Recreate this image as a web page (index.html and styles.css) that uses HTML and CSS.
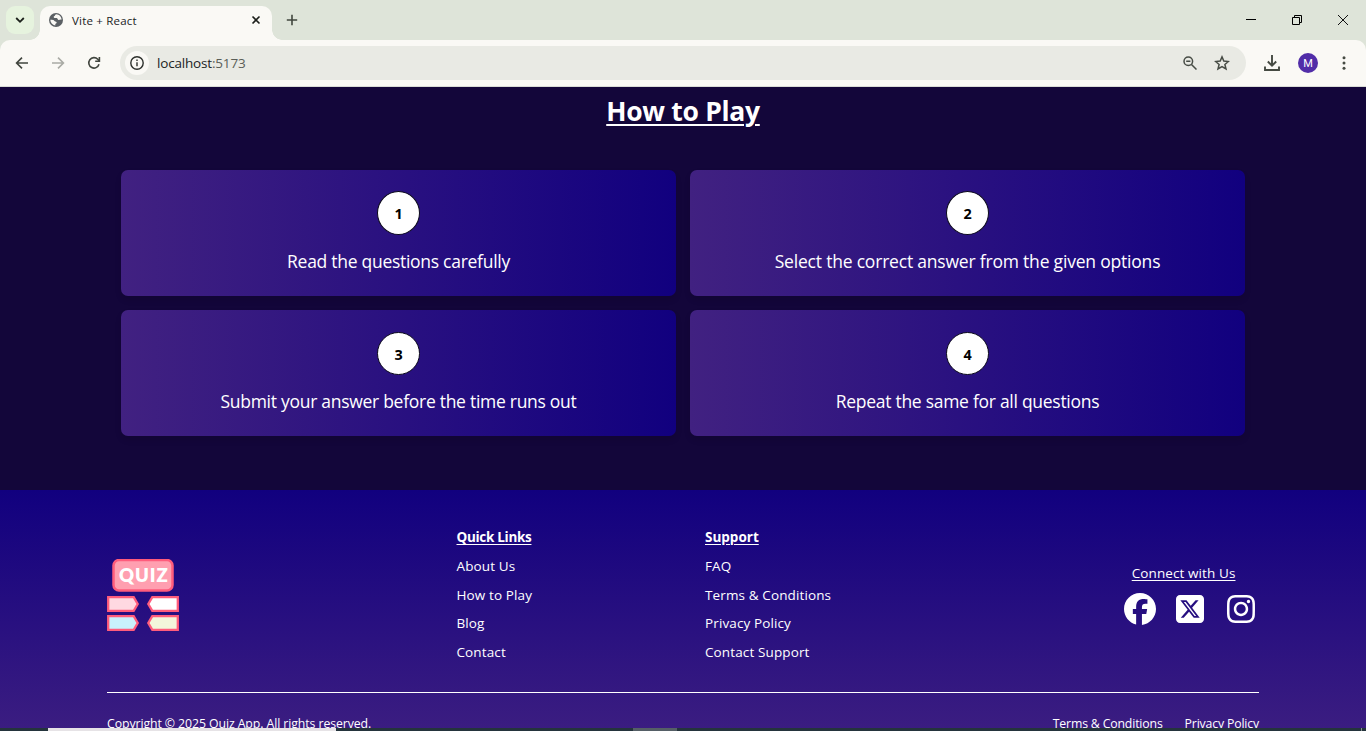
FILE: index.html
```html
<!DOCTYPE html>
<html lang="en">
<head>
<meta charset="utf-8">
<title>Vite + React</title>
<link rel="stylesheet" href="styles.css">
</head>
<body>
<div class="window">
  <header class="tabstrip">
    <div class="tab-search"><svg width="10" height="10" viewBox="0 0 10 10" fill="none" stroke="#1c211b" stroke-width="1.8"><path d="M1.2 3 5 6.800 8.800 3"/></svg></div>
    <div class="tab">
      <svg class="globe" width="14" height="14" viewBox="0 0 14 14"><circle cx="7" cy="7" r="7" fill="#5b6064"/><path d="M7.200 1.300C5.500 2 6.300 3 5 3.300 4.400 3.900 4.800 4.700 5.500 5h2.200c1.200.4.8 1.900 2 2 .9.100 1.500-.8 2.900-.3C12.500 4 10.400 1.500 7.200 1.300ZM1.300 6.800c.1 2.900 2.100 5.200 5 5.700V10.900c.9-.4 1.700-.9 1.200-1.900-.6-.8-1.700-.4-2.100-1.100-.3-.9-1.900-1.100-4.100-1.100Z" fill="#faf9f5"/></svg>
      <span class="tab-title">Vite + React</span>
      <svg class="tab-close" width="10" height="10" viewBox="0 0 10 10" stroke="#1c1f1b" stroke-width="1.600"><path d="m1.500 1.500 7 7m0-7-7 7"/></svg>
    </div>
    <svg class="new-tab" width="12" height="12" viewBox="0 0 12 12" stroke="#40463e" stroke-width="1.600"><path d="M6 .8v10.400M.8 6h10.400"/></svg>
    <div class="win-controls">
      <svg width="10" height="10" viewBox="0 0 10 10"><path d="M0 4h10v1H0z"/></svg>
      <svg width="10" height="10" viewBox="0 0 10 10" fill="none" stroke="#000"><path d="M.5 2.500h7v7h-7zM2.500 2.500v-2h7v7h-2"/></svg>
      <svg width="10" height="10" viewBox="0 0 10 10" stroke="#111"><path d="m0 0 10 10M10 0 0 10"/></svg>
    </div>
  </header>

  <nav class="toolbar">
    <div class="nav-buttons">
      <svg width="14" height="14" viewBox="0 0 14 14" fill="none" stroke="#40453e" stroke-width="1.600"><path d="M13 7H2M7 1.600 1.600 7 7 12.400"/></svg>
      <svg width="14" height="14" viewBox="0 0 14 14" fill="none" stroke="#a9aba5" stroke-width="1.600"><path d="M1 7h11M7 1.600 12.400 7 7 12.400"/></svg>
      <svg width="14" height="14" viewBox="0 0 14 14" fill="none" stroke="#40453e" stroke-width="1.600"><path d="M12 8.300A5.200 5.200 0 1 1 10.800 3.300L12.300 4.900"/><path d="M12.400 1v4.200H8.200"/></svg>
    </div>
    <div class="address">
      <span class="site-info"><svg width="14" height="14" viewBox="0 0 14 14" fill="none" stroke="#2d302c" stroke-width="1.400"><circle cx="7" cy="7" r="6.200"/><path d="M7 6.300v4M7 3.500v1.500"/></svg></span>
      <span class="url">localhost<span class="port">:5173</span></span>
      <svg class="zoom-icon" width="14" height="14" viewBox="0 0 14 14" fill="none" stroke="#474c45" stroke-width="1.500"><circle cx="5.300" cy="5.300" r="4.300"/><path d="m8.500 8.500 5 5M3.200 5.300h4.200"/></svg>
      <svg class="star" width="16" height="16" viewBox="0 0 16 16" fill="none" stroke="#474c45" stroke-width="1.500"><path d="m8 1.900 1.800 4.200 4.600.4-3.500 3 1.100 4.500L8 11.600 4 14l1.100-4.500-3.500-3 4.600-.4z"/></svg>
    </div>
    <div class="actions">
      <svg width="16" height="16" viewBox="0 0 16 16" fill="none" stroke="#454a42" stroke-width="1.900"><path d="M8 0v10.500M3.800 6.500 8 10.700l4.200-4.200M1 11.500V15h14v-3.500"/></svg>
      <span class="avatar">M</span>
      <svg class="menu" width="4" height="14" viewBox="0 0 4 14" fill="#454a42"><circle cx="2" cy="1.700" r="1.500"/><circle cx="2" cy="7" r="1.500"/><circle cx="2" cy="12.300" r="1.500"/></svg>
    </div>
  </nav>

  <main class="page">
    <section class="how">
      <h2>How to Play</h2>
      <div class="steps">
        <article class="step"><span class="num">1</span><p>Read the questions carefully</p></article>
        <article class="step"><span class="num">2</span><p class="long">Select the correct answer from the given options</p></article>
        <article class="step lower"><span class="num">3</span><p>Submit your answer before the time runs out</p></article>
        <article class="step lower"><span class="num">4</span><p>Repeat the same for all questions</p></article>
      </div>
    </section>

    <footer class="footer">
      <div class="footer-main">
        <div class="brand">
          <svg width="72" height="72" viewBox="0 0 72 72">
            <rect x="6.500" y="1" width="59" height="30.500" rx="5.500" fill="#ff9fb0" stroke="#ff5c7c" stroke-width="2.500"/>
            <text class="logo-text" x="36.800" y="22.700" text-anchor="middle">QUIZ</text>
            <g stroke="#ff5c7c" stroke-width="2.300">
              <path d="M1.200 38.200h25.500l4 6.800-4 6.800H1.200z" fill="#ffd9e1"/>
              <path d="M70.800 38.200H45.300l-4 6.800 4 6.800h25.500z" fill="#fff"/>
              <path d="M1.200 57.200h25.500l4 6.800-4 6.800H1.200z" fill="#c9f1fc"/>
              <path d="M70.800 57.200H45.300l-4 6.800 4 6.800h25.500z" fill="#f3f6db"/>
            </g>
          </svg>
        </div>
        <div class="links quick">
          <h3>Quick Links</h3>
          <a>About Us</a><a>How to Play</a><a>Blog</a><a>Contact</a>
        </div>
        <div class="links support">
          <h3>Support</h3>
          <a>FAQ</a><a>Terms &amp; Conditions</a><a>Privacy Policy</a><a>Contact Support</a>
        </div>
        <div class="connect">
          <p>Connect with Us</p>
          <div class="social">
            <svg width="32" height="32" viewBox="0 0 512 512" fill="#fff"><path d="M512 256C512 114.600 397.400 0 256 0S0 114.600 0 256c0 120 82.700 220.800 194.200 248.500V334.200h-52.800V256h52.800v-33.700c0-87.100 39.400-127.500 125-127.500 16.200 0 44.200 3.200 55.700 6.400v70.800c-6-.6-16.500-1-29.600-1-42 0-58.200 15.900-58.200 57.200V256h83.600l-14.400 78.200h-69.300v175.900C413.800 494.800 512 386.900 512 256z"/></svg>
            <svg width="28" height="32" viewBox="0 0 448 512" fill="#fff"><path d="M64 32C28.700 32 0 60.700 0 96v320c0 35.300 28.700 64 64 64h320c35.300 0 64-28.700 64-64V96c0-35.300-28.700-64-64-64H64zm297.100 84L257.300 234.600 379.400 396h-95.600L209 298.100 123.300 396H75.800l111-126.900L69.700 116h98l67.700 89.500L313.600 116h47.500zm-37.800 251.600L153.400 142.900h-28.300l171.800 224.700h26.300z"/></svg>
            <svg class="insta" width="32" height="32" viewBox="0 0 448 512" fill="#fff"><path d="M224.100 141c-63.600 0-114.900 51.300-114.900 114.900s51.300 114.900 114.900 114.900S339 319.500 339 255.900 287.700 141 224.100 141zm0 189.600c-41.100 0-74.700-33.500-74.700-74.700s33.500-74.700 74.700-74.700 74.700 33.500 74.700 74.700-33.600 74.700-74.700 74.700zm146.400-194.300c0 14.900-12 26.800-26.800 26.800-14.900 0-26.800-12-26.800-26.800s12-26.800 26.800-26.800 26.800 12 26.800 26.800zm76.100 27.200c-1.700-35.900-9.900-67.700-36.200-93.900-26.200-26.200-58-34.400-93.900-36.200-37-2.100-147.900-2.100-184.900 0-35.800 1.700-67.600 9.900-93.900 36.100s-34.400 58-36.200 93.900c-2.100 37-2.100 147.900 0 184.900 1.700 35.900 9.900 67.700 36.200 93.900s58 34.400 93.900 36.200c37 2.100 147.900 2.100 184.900 0 35.900-1.700 67.700-9.900 93.900-36.200 26.200-26.200 34.400-58 36.200-93.900 2.100-37 2.100-147.800 0-184.800zM398.800 388c-7.800 19.600-22.900 34.700-42.600 42.600-29.500 11.700-99.500 9-132.100 9s-102.700 2.600-132.100-9c-19.600-7.800-34.700-22.900-42.600-42.600-11.700-29.500-9-99.500-9-132.100s-2.600-102.700 9-132.100c7.800-19.600 22.900-34.700 42.600-42.600 29.500-11.700 99.500-9 132.100-9s102.700-2.600 132.100 9c19.600 7.800 34.700 22.900 42.600 42.600 11.700 29.500 9 99.500 9 132.100s2.700 102.700-9 132.100z"/></svg>
          </div>
        </div>
      </div>
      <div class="legal">
        <span class="copy">Copyright © 2025 Quiz App. All rights reserved.</span>
        <span class="legal-links"><a>Terms &amp; Conditions</a><a>Privacy Policy</a></span>
      </div>
    </footer>
  </main>
  <div class="taskbar"><i class="task-search"></i><i class="task-active"></i><i class="task-edge"></i></div>
</div>
</body>
</html>
```

FILE: styles.css
```css
* { box-sizing: border-box; }
body {
  margin: 0;
  font-family: "Segoe UI", "Open Sans", "Noto Sans", sans-serif;
  color: #fff;
}
svg { display: block; flex: none; }
h2, h3, p { margin: 0; }

.window {
  width: 1366px;
  height: 731px;
  overflow: hidden;
  display: flex;
  flex-direction: column;
  background: #dee4d9;
}

/* Browser tab strip */
.tabstrip {
  height: 40px;
  flex: none;
  display: flex;
  align-items: center;
  padding-left: 6px;
}
.tab-search {
  width: 28px;
  height: 28px;
  border-radius: 9px;
  background: #e6f3de;
  display: grid;
  place-items: center;
}
.tab {
  width: 232px;
  height: 34px;
  margin: 6px 0 0 6px;
  padding: 0 11px 6px 9px;
  border-radius: 10px 10px 0 0;
  background: #faf9f5;
  display: flex;
  align-items: center;
  position: relative;
}
.tab::before,
.tab::after {
  content: "";
  position: absolute;
  bottom: 0;
  width: 10px;
  height: 10px;
}
.tab::before { left: -10px; background: radial-gradient(circle at 0 0, transparent 9.500px, #faf9f5 10px); }
.tab::after { right: -10px; background: radial-gradient(circle at 100% 0, transparent 9.500px, #faf9f5 10px); }
.tab-title {
  margin-left: 9px;
  padding-top: 1px;
  flex: 1;
  font-size: 11.500px;
  letter-spacing: .2px;
  line-height: 16px;
  color: #20231f;
}
.new-tab { margin-left: 14px; }
.win-controls {
  margin-left: auto;
  padding-right: 18px;
  display: flex;
  gap: 36px;
}

/* Browser toolbar */
.toolbar {
  height: 47px;
  flex: none;
  display: flex;
  align-items: center;
  padding: 0 20px 1px 15px;
  background: #faf9f5;
  border-bottom: 1px solid #d9dcd6;
  border-radius: 10px 10px 0 0;
}
.nav-buttons { display: flex; gap: 22px; }
.address {
  width: 1126px;
  height: 34px;
  margin-left: 19px;
  padding: 0 16px 0 5px;
  border-radius: 17px;
  background: #e9eae4;
  display: flex;
  align-items: center;
}
.site-info {
  width: 24px;
  height: 24px;
  border-radius: 50%;
  background: #faf9f5;
  display: grid;
  place-items: center;
}
.url {
  margin-left: 8px;
  flex: 1;
  font-size: 13.500px;
  letter-spacing: -.18px;
  line-height: 20px;
  color: #20231f;
}
.port { color: #5a5e57; }
.star { margin-left: 17px; }
.actions {
  margin-left: 18px;
  display: flex;
  align-items: center;
}
.avatar {
  width: 20px;
  height: 20px;
  margin-left: 18px;
  border-radius: 50%;
  background: #512da8;
  font: 11px/21px Roboto, sans-serif;
  text-align: center;
}
.menu { margin-left: 24px; }

/* Quiz page */
.page {
  height: 641px;
  flex: none;
  overflow: hidden;
  background: #13063a;
}
.how {
  height: 403px;
  padding: 4px 121px 0;
}
h2 {
  font-size: 26.500px;
  letter-spacing: -.3px;
  line-height: 41px;
  height: 42px;
  text-align: center;
  text-decoration: underline;
  text-decoration-thickness: 2px;
  text-underline-offset: 3px;
}
.steps {
  margin-top: 37px;
  display: grid;
  grid-template-columns: 555px 555px;
  grid-auto-rows: 126px;
  gap: 14px;
}
.step {
  border-radius: 7px;
  background: linear-gradient(to right, #412181, #11007f);
  box-shadow: 0 4px 6px rgba(0, 0, 0, .1);
  display: flex;
  flex-direction: column;
  align-items: center;
  padding-top: 21px;
}
.num {
  width: 43px;
  height: 44px;
  border: 1px solid #0c0a1c;
  border-radius: 50%;
  background: #fff;
  color: #000;
  font-size: 14.400px;
  font-weight: 700;
  line-height: 43px;
  text-align: center;
}
.lower .num { height: 43px; margin-top: 1px; }
.step p {
  margin-top: 13px;
  font-size: 17.500px;
  letter-spacing: -.28px;
  line-height: 27px;
  white-space: nowrap;
}
.step .long { letter-spacing: -.2px; }

/* Footer */
.footer {
  height: 274px;
  padding: 36px 107px 0;
  background: linear-gradient(to bottom, #11007f, #412181);
}
.footer-main {
  height: 167px;
  display: flex;
  border-bottom: 1px solid #fff;
}
.brand { width: 349.500px; padding-top: 33px; }
.links {
  display: flex;
  flex-direction: column;
}
.links h3, .links a { font-size: 13.500px; line-height: 22px; height: 28.750px; letter-spacing: .12px; }
.links h3 { letter-spacing: -.3px; }
.links h3, .connect p { text-decoration: underline; text-underline-offset: 2px; }
.quick { width: 248.500px; }
.support h3 { letter-spacing: 0; }
.connect {
  flex: 1;
  padding: 36px 3px 0 0;
  display: flex;
  flex-direction: column;
  align-items: flex-end;
}
.connect p {
  margin-right: 20.500px;
  font-size: 13.500px;
  letter-spacing: .1px;
  line-height: 22px;
}
.social {
  margin-top: 9px;
  display: flex;
  gap: 20px;
}
.insta { margin: 0 -1px 0 1px; }
.logo-text {
  font: 800 18.500px Lato, sans-serif;
  letter-spacing: .9px;
  fill: #fff;
}
.legal {
  padding-top: 20px;
  display: flex;
  justify-content: space-between;
  font-size: 12.300px;
  letter-spacing: -.09px;
  line-height: 22px;
}
.legal-links { display: flex; gap: 22px; letter-spacing: -.17px; }

/* Sliver of the desktop taskbar */
.taskbar {
  height: 3px;
  flex: none;
  display: flex;
  background: #24343c;
}
.task-search { width: 288px; margin-left: 48px; background: #e6e3e6; }
.task-active { width: 44px; margin-left: 297px; background: #555f66; }
.task-edge { width: 1px; margin-left: 684px; background: #87908f; }
```
